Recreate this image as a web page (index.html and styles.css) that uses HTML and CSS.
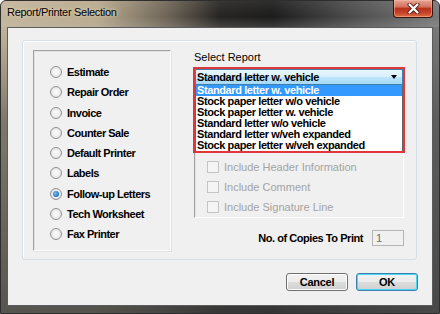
FILE: index.html
```html
<!DOCTYPE html>
<html lang="en">
<head>
  <meta charset="UTF-8" />
  <title>Report/Printer Selection</title>
  <link rel="stylesheet" href="styles.css">
</head>
<body>

  <div class="window">
    <div class="titlebar">
      <span class="title">Report/Printer Selection</span>
      <div class="close">
        <svg width="13" height="11" viewBox="0 0 13 11">
          <path d="M2.5 1.5 L10.5 9.5 M10.5 1.5 L2.5 9.5" stroke="#5a2018" stroke-width="4" stroke-linecap="round" />
          <path d="M2.5 1.5 L10.5 9.5 M10.5 1.5 L2.5 9.5" stroke="#ffffff" stroke-width="2.2" stroke-linecap="round" />
        </svg>
      </div>
    </div>

    <div class="client">
      <div class="panel">
        <div class="radios">
          <div class="radio"><span class="dot"></span>Estimate</div>
          <div class="radio"><span class="dot"></span>Repair Order</div>
          <div class="radio"><span class="dot"></span>Invoice</div>
          <div class="radio"><span class="dot"></span>Counter Sale</div>
          <div class="radio"><span class="dot"></span>Default Printer</div>
          <div class="radio"><span class="dot"></span>Labels</div>
          <div class="radio"><span class="dot checked"></span>Follow-up Letters</div>
          <div class="radio"><span class="dot"></span>Tech Worksheet</div>
          <div class="radio"><span class="dot"></span>Fax Printer</div>
        </div>

        <div class="report">
          <div class="report-label">Select Report</div>
          <div class="combo-wrap">
            <div class="combo">
              <span>Standard letter w. vehicle</span>
              <span class="arrow"></span>
            </div>
            <ul class="list">
              <li class="selected">Standard letter w. vehicle</li>
              <li>Stock paper letter w/o vehicle</li>
              <li>Stock paper letter w. vehicle</li>
              <li>Standard letter w/o vehicle</li>
              <li>Standard letter w/veh expanded</li>
              <li>Stock paper letter w/veh expanded</li>
            </ul>
            <div class="highlight"></div>
          </div>

          <div class="options">
            <div class="check"><span class="box"></span>Include Header Information</div>
            <div class="check"><span class="box"></span>Include Comment</div>
            <div class="check"><span class="box"></span>Include Signature Line</div>
          </div>

          <div class="copies">
            <span class="copies-label">No. of Copies To Print</span>
            <div class="textbox">1</div>
          </div>
        </div>
      </div>

      <div class="buttons">
        <button class="btn">Cancel</button>
        <button class="btn default">OK</button>
      </div>
    </div>
  </div>

</body>
</html>
```

FILE: styles.css
```css
* {
  box-sizing: border-box;
  font-family: 'Liberation Sans', Arial, sans-serif;
}

body {
  margin: 0;
  width: 440px;
  height: 314px;
  overflow: hidden;
}

.window {
  width: 440px;
  height: 314px;
  background:
    linear-gradient(to bottom, rgba(0,0,0,0) 0px, rgba(0,0,0,0) 26px, rgba(70,70,70,0.55) 120px, rgba(60,60,60,0.8) 314px),
    linear-gradient(to right, #c3b59a 0%, #b8a98d 22%, #6d6456 38%, #262422 50%, #1c1c1c 62%, #4c4c4c 80%, #7a7a7a 100%);
  border: 1px solid #2e2e2e;
  border-radius: 6px 6px 0 0;
}

.titlebar {
  height: 26px;
  display: flex;
  align-items: flex-start;
  background: linear-gradient(to bottom, rgba(255,255,255,0.08), rgba(255,255,255,0) 60%, rgba(200,200,200,0.18));
}

.title {
  padding: 5px 0 0 6px;
  font-size: 11px;
  line-height: 13px;
  letter-spacing: -0.3px;
  color: #000;
  text-shadow: 0 0 6px rgba(230,215,190,0.9), 0 0 3px rgba(230,215,190,0.9);
}

.close {
  margin-left: auto;
  margin-right: 6px;
  margin-top: -1px;
  width: 40px;
  height: 18px;
  border: 1px solid #3a1410;
  border-top: none;
  border-radius: 0 0 4px 4px;
  background: linear-gradient(to bottom, #e7a497 0%, #d5735f 40%, #b8321c 50%, #c8412a 75%, #e0703f 100%);
  box-shadow: inset 0 0 0 1px rgba(255,200,180,0.45);
  display: flex;
  justify-content: center;
  align-items: center;
}

.client {
  margin: 0 6px 0 6px;
  height: 279px;
  background: #f0f0f0;
  border: 1px solid #5c5c5c;
}

.panel {
  margin: 12px 0 0 14px;
  width: 395px;
  height: 220px;
  border: 1px solid #d5dfe5;
  border-radius: 3px;
  box-shadow: inset 1px 1px 0 #ffffff;
  display: flex;
  padding: 9px 0 0 10px;
}

.radios {
  width: 138px;
  height: 201px;
  border: 1px solid;
  border-color: #a0a0a0 #ffffff #ffffff #a0a0a0;
  box-shadow: inset 1px 1px 0 #e3e3e3, 1px 1px 0 #e3e3e3;
  padding: 11px 0 0 16px;
}

.radio {
  height: 20.25px;
  display: flex;
  align-items: center;
  font-size: 11px;
  font-weight: bold;
  letter-spacing: -0.5px;
  color: #000;
}

.dot {
  width: 12px;
  height: 12px;
  border-radius: 50%;
  border: 1px solid #929292;
  background: radial-gradient(circle at 50% 50%, #f7f7f7 30%, #d6d6d6 100%);
  margin-right: 5px;
  display: flex;
  justify-content: center;
  align-items: center;
}

.dot.checked::after {
  content: "";
  width: 6px;
  height: 6px;
  border-radius: 50%;
  background: radial-gradient(circle at 40% 40%, #7cc4f4 0%, #1b6cc4 70%, #0d4e9a 100%);
}

.report {
  margin-left: 22px;
  width: 212px;
}

.report-label {
  margin-top: 1px;
  padding-left: 1px;
  height: 14px;
  font-size: 11px;
  line-height: 13px;
  color: #000;
}

.combo-wrap {
  position: relative;
  margin: 4px 2px 0 2px;
}

.combo {
  height: 16px;
  border: 1px solid #3c7fb1;
  background: linear-gradient(to bottom, #eaf6fd 0%, #d9f0fc 50%, #bee6fd 51%, #a7d9f5 100%);
  display: flex;
  align-items: center;
  padding-left: 1px;
  font-size: 11px;
  font-weight: bold;
  letter-spacing: -0.4px;
  color: #000;
}

.arrow {
  margin-left: auto;
  margin-right: 5px;
  width: 0;
  height: 0;
  border-top: 4px solid #000;
  border-left: 3.5px solid transparent;
  border-right: 3.5px solid transparent;
}

.list {
  position: absolute;
  top: 16px;
  left: 0;
  width: 208px;
  margin: 0;
  padding: 0;
  list-style: none;
  background: #fff;
  border: 1px solid #646464;
  border-top: none;
}

.list li {
  height: 11px;
  line-height: 11px;
  padding-left: 1px;
  font-size: 11px;
  font-weight: bold;
  letter-spacing: -0.4px;
  color: #000;
  white-space: nowrap;
}

.list li.selected {
  background: #3399ff;
  color: #fff;
}

.highlight {
  position: absolute;
  top: -2px;
  left: -2px;
  width: 212px;
  height: 86px;
  border: 2px solid #e2373a;
}

.options {
  margin: 0 1px;
  height: 133px;
  border: 1px solid;
  border-color: #a0a0a0 #ffffff #ffffff #a0a0a0;
  box-shadow: inset 1px 1px 0 #e3e3e3;
  padding: 71px 0 0 12px;
}

.check {
  height: 20px;
  display: flex;
  align-items: center;
  font-size: 11px;
  color: #a3a3a3;
}

.box {
  width: 12px;
  height: 12px;
  border: 1px solid #c4c4c4;
  background: #f4f4f4;
  margin-right: 5px;
}

.copies {
  margin-top: 12px;
  height: 16px;
  display: flex;
  justify-content: flex-end;
  align-items: center;
  padding-right: 1px;
}

.copies-label {
  font-size: 11px;
  font-weight: bold;
  letter-spacing: -0.45px;
  color: #000;
  margin-right: 9px;
}

.textbox {
  width: 32px;
  height: 16px;
  border: 1px solid #b5b5b5;
  background: #f0f0f0;
  font-size: 11px;
  line-height: 14px;
  padding-left: 3px;
  color: #6d6d6d;
}

.buttons {
  margin-top: 13px;
  display: flex;
  justify-content: flex-end;
  gap: 8px;
  padding-right: 14px;
}

.btn {
  width: 62px;
  height: 18px;
  padding: 0;
  border: 1px solid #707070;
  border-radius: 3px;
  background: linear-gradient(to bottom, #f2f2f2 0%, #ebebeb 50%, #dddddd 51%, #cfcfcf 100%);
  box-shadow: inset 0 0 0 1px #fcfcfc;
  font-size: 11px;
  font-weight: bold;
  letter-spacing: -0.3px;
  color: #000;
}

.btn.default {
  border-color: #3c7fb1;
  box-shadow: inset 0 0 0 1px #48d6fb;
}
```
